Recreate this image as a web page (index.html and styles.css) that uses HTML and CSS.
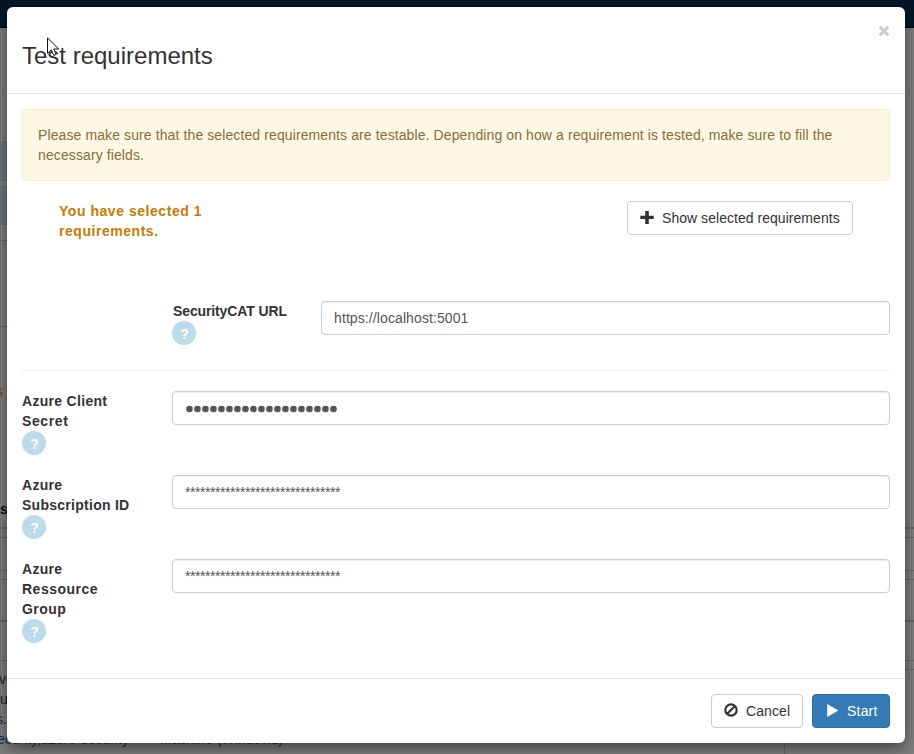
FILE: index.html
```html
<!DOCTYPE html>
<html lang="en">
<head>
<meta charset="utf-8">
<title>Test requirements</title>
<link rel="stylesheet" href="styles.css">
</head>
<body>
<div class="page">
  <div class="navbar"></div>
  <div class="band gap-top"></div>
  <div class="band info first"></div>
  <div class="band info second"></div>
  <div class="band line toolbar"></div>
  <div class="band line-blue panel"></div>
  <div class="band status">s</div>
  <div class="band heading">s</div>
  <div class="band line r1"></div>
  <div class="band line r2"></div>
  <div class="band line r3"></div>
  <div class="band line r4"></div>
  <div class="band line r5"></div>
  <div class="band line r6"></div>
  <div class="details">
    <div class="copy">
      <div class="dark shift-a">ve</div>
      <div class="dark">ur</div>
      <div class="shift-b">s.</div>
      <div class="links"><span class="shift-c">ecurity,azure-security</span><span class="tag">Machine (Windows)</span></div>
    </div>
    <div class="side"></div>
  </div>
</div>

<div class="modal">
  <div class="modal-header">
    <h4><span>Test requirements</span></h4>
    <button class="close" aria-label="Close"><svg width="12" height="12" viewBox="0 0 12 12"><path d="M1.7 1.7 10.3 10.3M10.3 1.7 1.7 10.3" stroke="#ccc" stroke-width="3.1"/></svg></button>
  </div>
  <div class="modal-body">
    <div class="alert">Please make sure that the selected requirements are testable. Depending on how a requirement is tested, make sure to fill the<br>necessary fields.</div>
    <div class="selection">
      <div class="selected">You have selected 1<br>requirements.</div>
      <button class="btn show"><svg width="14" height="14" viewBox="0 0 14 14"><path d="M5.2.1h3.6v4.7H13.7v3.3H8.8v4.8H5.2V8.1H.3V4.8h4.9z" fill="#333"/></svg><span>Show selected requirements</span></button>
    </div>
    <div class="field url">
      <div class="label"><span class="w-url">SecurityCAT URL</span><i class="help">?</i></div>
      <div class="input host">https://localhost:5001</div>
    </div>
    <hr>
    <div class="field">
      <div class="label"><span class="w-azc">Azure Client</span><span class="w-secret">Secret</span><i class="help">?</i></div>
      <div class="input"><svg class="dots" width="154" height="8" viewBox="0 0 154 8"><path d="M4.5 4H149" stroke="#555" stroke-width="6.6" stroke-linecap="round" stroke-dasharray="0 8"/></svg></div>
    </div>
    <div class="field">
      <div class="label"><span class="w-az">Azure</span><span class="w-sub">Subscription ID</span><i class="help">?</i></div>
      <div class="input stars">*******************************</div>
    </div>
    <div class="field">
      <div class="label"><span class="w-az">Azure</span><span class="w-res">Ressource</span><span class="w-grp">Group</span><i class="help">?</i></div>
      <div class="input stars">*******************************</div>
    </div>
  </div>
  <div class="modal-footer">
    <button class="btn cancel"><svg width="14" height="14" viewBox="0 0 14 14"><circle cx="7" cy="6" r="5.7" fill="none" stroke="#333" stroke-width="2.2"/><path d="M3.2 9.8 10.8 2.2" stroke="#333" stroke-width="2.2"/></svg><span>Cancel</span></button>
    <button class="btn start"><svg width="14" height="14" viewBox="0 0 14 14"><path d="M2.2.1 13.4 6.5 2.2 12.9z" fill="#fff"/></svg><span>Start</span></button>
  </div>
</div>

<svg class="cursor" width="13" height="20" viewBox="0 0 13 20"><path d="M.5.8V16.3L4.2 12.8 6.8 18.5 9.2 17.4 6.7 12H11.6z" fill="#fff" stroke="#111122" stroke-width="1"/></svg>
</body>
</html>
```
FILE: styles.css
```css
* { box-sizing: border-box; }
body {
  margin: 0;
  width: 914px;
  height: 754px;
  overflow: hidden;
  position: relative;
  font: 14px/20px "Liberation Sans", Arial, sans-serif;
  color: #333;
}
svg { overflow: visible; }
.page { height: 754px; overflow: hidden; background: #7f7f7f; }
.navbar { height: 28px; background: #001727; border-bottom: 1px solid #000a12; }
.band { overflow: hidden; }
.gap-top { height: 113px; }
.info { width: 460px; background: #6c777b; border: 1px solid #5e777d; border-left: 0; }
.first { height: 40px; margin-bottom: 5px; }
.second { height: 39px; margin-bottom: 15px; }
.line { border-top: 1px solid #666; }
.toolbar { width: 460px; height: 86px; }
.panel { width: 460px; height: 55px; border-top: 1px solid #507079; }
.status { height: 118px; color: #794500; text-indent: -4px; }
.heading { height: 28px; font-weight: bold; color: #111; }
.r1 { height: 10px; border-top-width: 2px; }
.r2 { height: 33px; }
.r3 { height: 9px; }
.r4 { height: 41px; }
.r5 { height: 40px; border-top-width: 2px; }
.r6 { height: 9px; }
.details { display: flex; height: 85px; }
.copy { width: 785px; border-right: 1px solid #666; color: #15304a; white-space: nowrap; }
.side { flex: 1; border-top: 1px solid #666; }
.dark { color: #1a1a1a; }
.shift-a { text-indent: -1px; }
.shift-b { text-indent: -4px; }
.links { display: flex; }
.shift-c { width: 160px; margin-left: -3px; }
.tag { margin-left: 3px; }
.modal {
  position: absolute;
  left: 7px;
  top: 7px;
  width: 898px;
  height: 736px;
  display: flex;
  flex-direction: column;
  background: #fff;
  border-radius: 6px;
  box-shadow: 0 5px 15px rgba(0, 0, 0, .5);
}
.modal-header {
  height: 87px;
  display: flex;
  justify-content: space-between;
  align-items: flex-start;
  padding: 15px;
  border-bottom: 1px solid #e5e5e5;
}
h4 { margin: 20px 0 0; font-size: 24px; line-height: 28px; font-weight: 400; }
.close { display: flex; padding: 0; margin: 3px 0 0; border: 0; background: none; }
.modal-body { flex: 1; padding: 15px; }
.alert {
  height: 72px;
  padding: 15px;
  background: #fcf8e3;
  border: 1px solid #faebcc;
  border-radius: 4px;
  color: #8a6d3b;
  white-space: nowrap;
  letter-spacing: .105px;
}
.selection { display: flex; justify-content: space-between; height: 120px; padding: 20px 37px 0; }
.selected { color: #cc7a00; font-weight: bold; white-space: nowrap; letter-spacing: .54px; }
.btn {
  display: flex;
  align-items: center;
  gap: 8px;
  height: 34px;
  padding: 0 12px;
  background: #fff;
  border: 1px solid #ccc;
  border-radius: 4px;
  font: inherit;
  color: #333;
  white-space: nowrap;
}
.show { width: 226px; letter-spacing: .04px; }
.cancel { width: 92px; letter-spacing: .1px; }
.start { width: 78px; background: #337ab7; border-color: #2e6da4; color: #fff; letter-spacing: .2px; }
.field { display: flex; min-height: 64px; margin-bottom: 20px; }
.field.url { padding-left: 150px; min-height: 49px; }
.label { width: 150px; font-weight: bold; }
.url .label { width: 149px; }
.label span { display: block; width: max-content; }
.w-url { padding-left: 1px; letter-spacing: -.12px; }
.w-azc { letter-spacing: .3px; }
.w-secret { letter-spacing: .6px; }
.w-az { letter-spacing: .3px; }
.w-sub { letter-spacing: .27px; }
.w-res { letter-spacing: .5px; }
.w-grp { letter-spacing: .45px; }
.help {
  display: block;
  width: 24px;
  height: 24px;
  border-radius: 50%;
  background: #bbdaea;
  color: #fff;
  font: bold 14px/26px "Liberation Sans", Arial, sans-serif;
  text-align: center;
  text-indent: 1px;
}
.input {
  flex: 1;
  height: 34px;
  padding: 6px 12px;
  border: 1px solid #ccc;
  border-radius: 4px;
  box-shadow: inset 0 1px 1px rgba(0, 0, 0, .075);
  color: #555;
}
.host { letter-spacing: .1px; }
.dots { display: block; margin-top: 7px; }
.stars { letter-spacing: -.449px; }
hr { margin: 0 0 20px; border: 0; border-top: 1px solid #eee; }
.modal-footer {
  height: 65px;
  display: flex;
  justify-content: flex-end;
  gap: 9px;
  padding: 15px;
  border-top: 1px solid #e5e5e5;
}
.cursor { position: absolute; left: 47px; top: 37px; }
```
